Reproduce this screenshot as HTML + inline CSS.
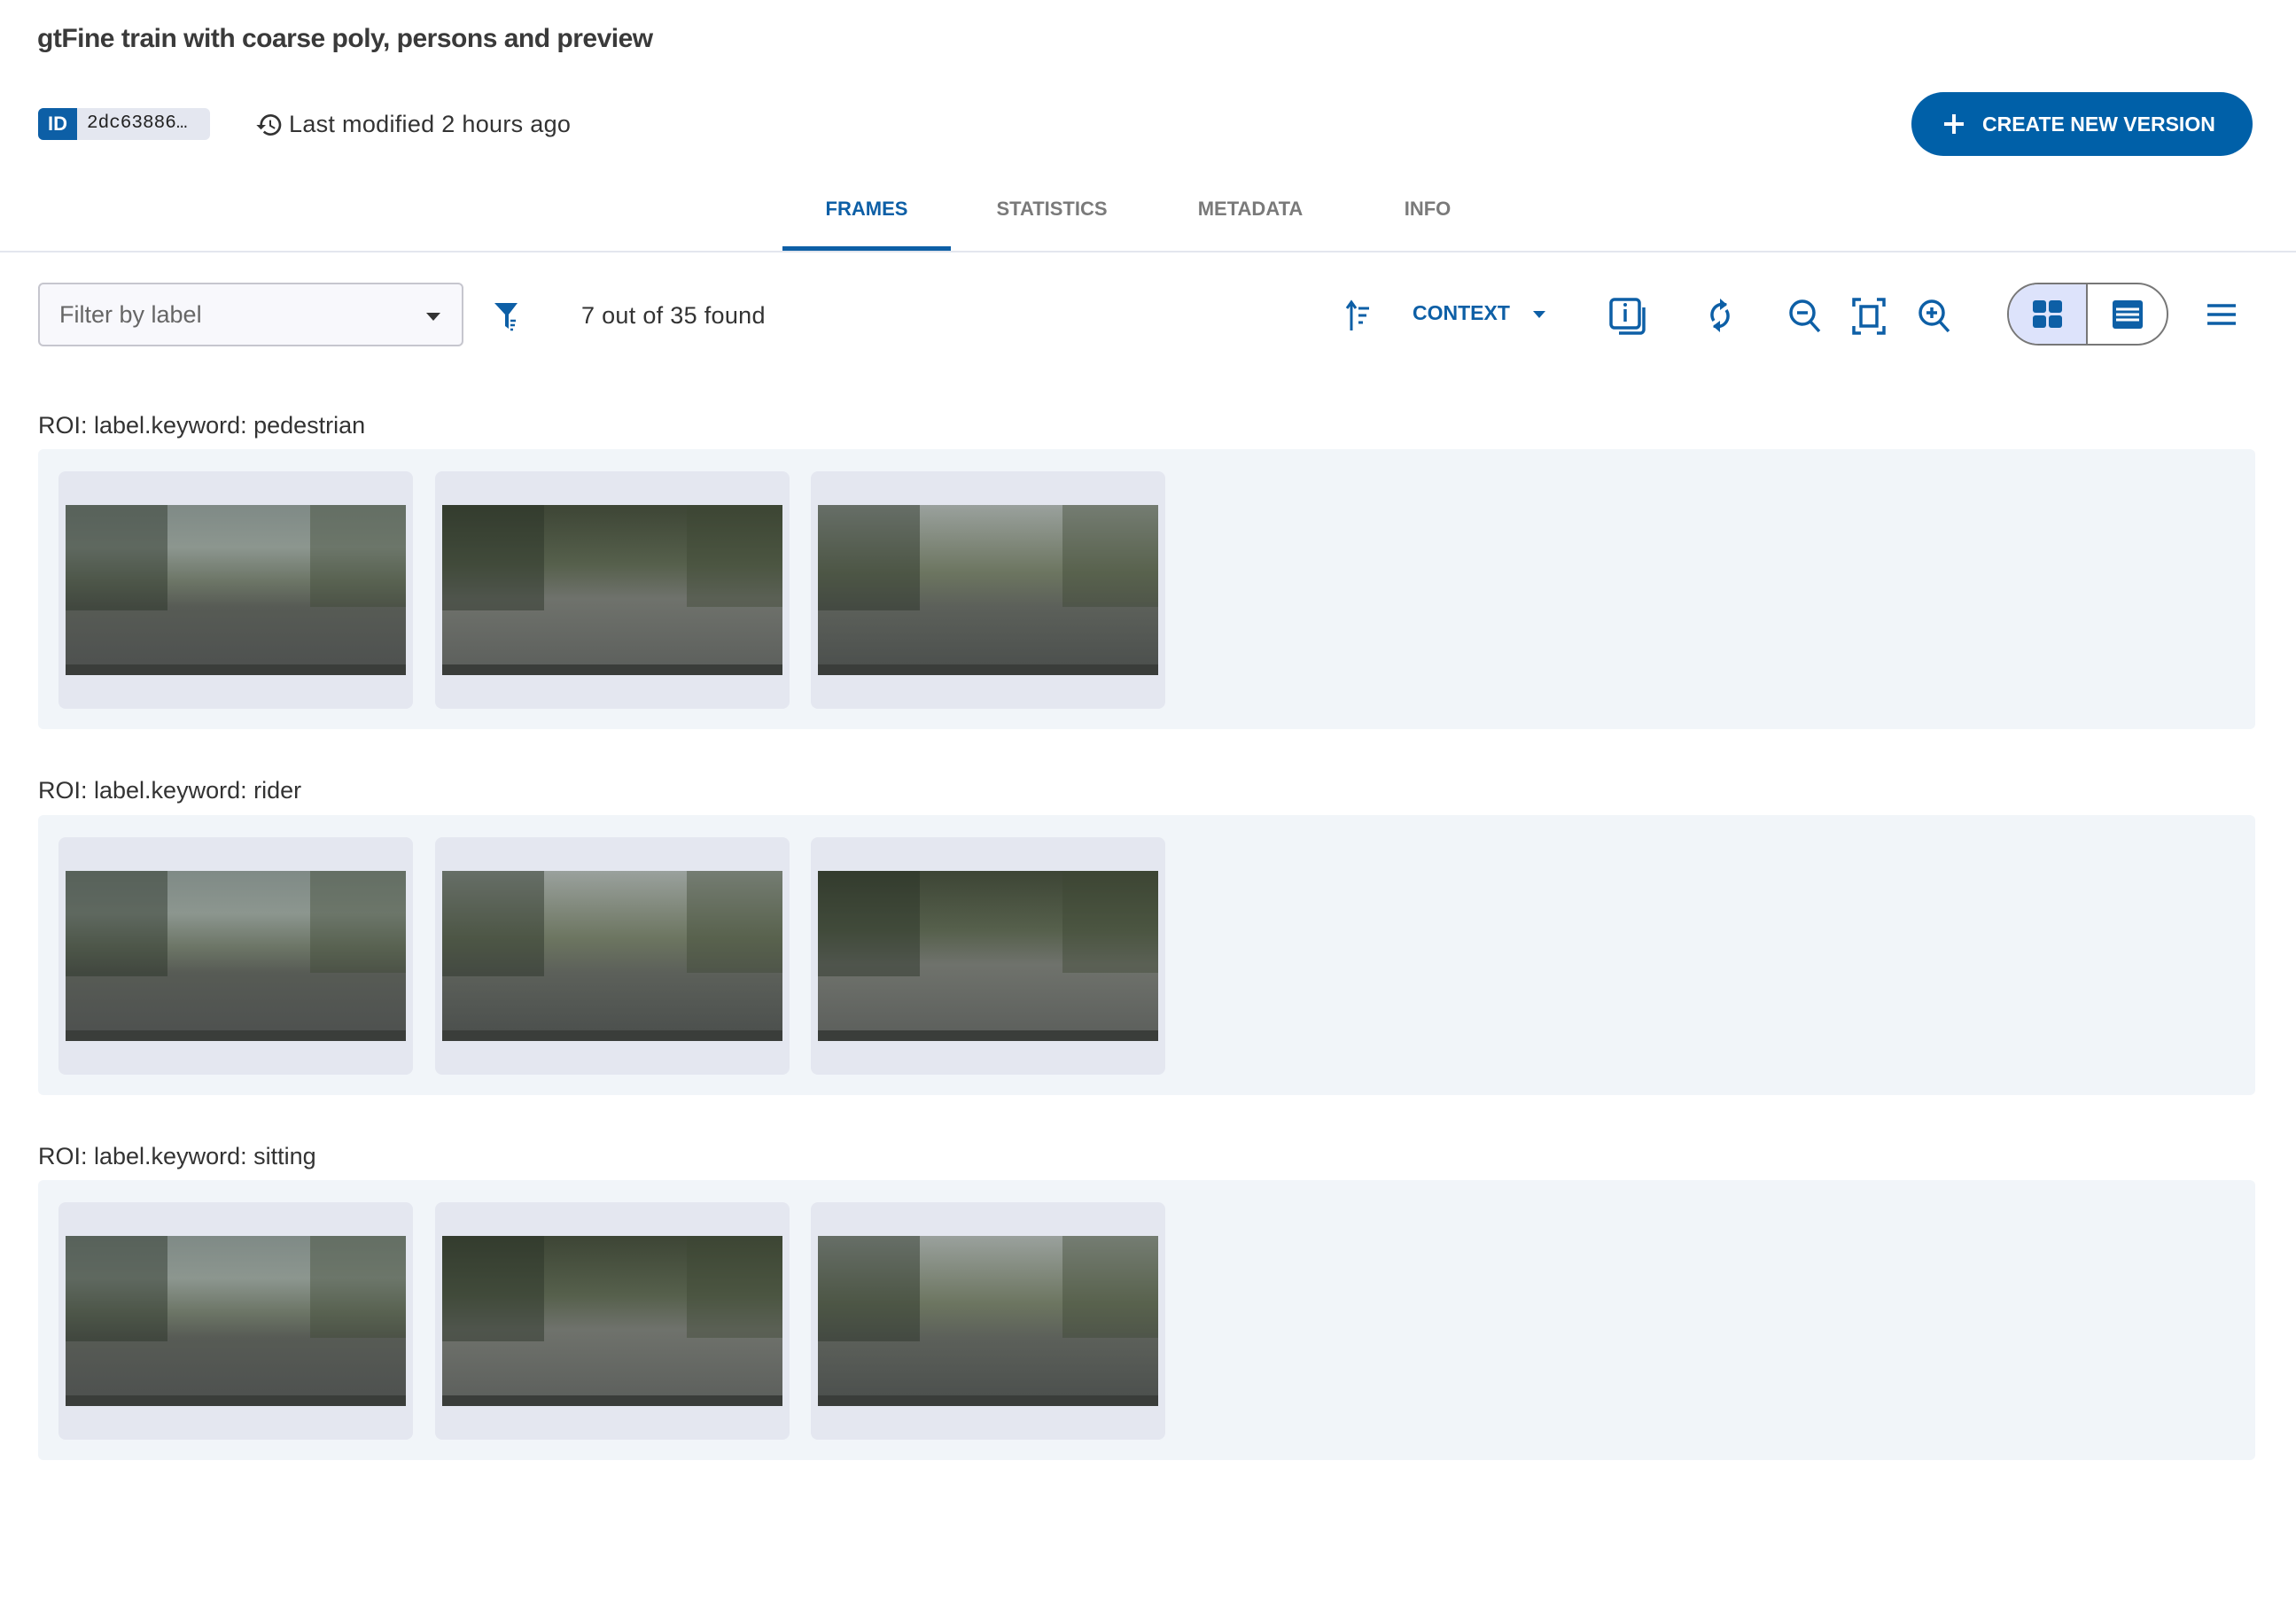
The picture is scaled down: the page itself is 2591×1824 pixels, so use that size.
<!DOCTYPE html>
<html><head><meta charset="utf-8"><style>
*{box-sizing:border-box;margin:0;padding:0}
body{width:2591px;height:1824px;background:#fff;font-family:"Liberation Sans",sans-serif;position:relative;overflow:hidden;color:#333}
.a{position:absolute}
.title{left:42px;top:27px;font-size:30px;font-weight:bold;color:#3a3a3a;letter-spacing:-0.5px}
.chip{left:43px;top:122px;width:194px;height:36px;background:#e4e7f0;border-radius:6px;overflow:hidden}
.chip .id{position:absolute;left:0;top:0;width:44px;height:36px;background:#0d5fa6;color:#fff;font-weight:bold;font-size:22px;text-align:center;line-height:36px}
.chip .h{position:absolute;left:55px;top:0;line-height:36px;font-family:"Liberation Mono",monospace;font-size:21px;color:#222}
.mod{left:326px;top:125px;font-size:27px;color:#333;letter-spacing:0.3px}
.btn{left:2157px;top:104px;width:385px;height:72px;border-radius:36px;background:#0060a8;color:#fff;font-weight:bold;font-size:23px;line-height:72px}
.tab{top:223px;font-size:22px;font-weight:bold;color:#7a7a7a;transform:translateX(-50%)}
.sel{color:#0d5fa6}
.line{left:0;top:283px;width:2591px;height:2px;background:#e3e6ee}
.ul{left:883px;top:278px;width:190px;height:5px;background:#0d5fa6}
.filter{left:43px;top:319px;width:480px;height:72px;background:#f8f8fc;border:2px solid #c6c6ce;border-radius:6px}
.filter span{position:absolute;left:22px;top:19px;font-size:27px;color:#666}
.tri{position:absolute;left:436px;top:32px;border-left:8px solid transparent;border-right:8px solid transparent;border-top:9px solid #333}
.found{left:656px;top:341px;font-size:27px;color:#333;letter-spacing:0.3px}
.ctx{left:1594px;top:340px;font-size:23px;font-weight:bold;color:#0d5fa6}
.tog{left:2265px;top:319px;width:182px;height:71px;border:2px solid #777;border-radius:36px;overflow:hidden}
.lbl{left:43px;font-size:27px;color:#333}
.panel{left:43px;width:2502px;height:316px;background:#f1f5f9;border-radius:6px}
.card{position:absolute;top:25px;width:400px;height:268px;background:#e4e7f0;border-radius:8px}
.img{position:absolute;left:8px;top:38px;width:384px;height:192px;overflow:hidden}
.i1{background:linear-gradient(180deg,#7f8a86 0%,#8c968f 25%,#6c7566 45%,#575b55 60%,#4d504f 100%)}
.i2{background:linear-gradient(180deg,#3d4535 0%,#56604c 35%,#6f726c 55%,#5b5e5b 100%)}
.i3{background:linear-gradient(180deg,#9aa19d 0%,#6c7560 40%,#5c605a 60%,#4a4e4c 100%)}
.img:before{content:"";position:absolute;left:0;top:0;width:30%;height:62%;background:rgba(40,48,38,.45)}
.img i{position:absolute;right:0;top:0;width:28%;height:60%;background:rgba(60,70,50,.4)}
.img:after{content:"";position:absolute;left:0;bottom:0;width:100%;height:12px;background:#3a3d3a}
</style></head><body>
<div class="a title">gtFine train with coarse poly, persons and preview</div>
<div class="a chip"><div class="id">ID</div><div class="h">2dc63886…</div></div>
<svg class="a" style="left:288px;top:125px" width="32" height="32" viewBox="0 0 24 24"><path d="M13 3a9 9 0 0 0-9 9H1l3.9 3.9L9 12H6a7 7 0 1 1 2.050 4.95l-1.42 1.42A9 9 0 1 0 13 3zm-1 5v5l4.25 2.52.77-1.28-3.52-2.09V8z" fill="#333"/></svg>
<div class="a mod">Last modified 2 hours ago</div>
<div class="a btn"><svg style="position:absolute;left:35px;top:23px" width="26" height="26" viewBox="0 0 26 26"><path d="M13 2v22M2 13h22" stroke="#fff" stroke-width="4"/></svg><span style="position:absolute;left:80px">CREATE NEW VERSION</span></div>
<div class="a tab sel" style="left:978px">FRAMES</div>
<div class="a tab" style="left:1187px">STATISTICS</div>
<div class="a tab" style="left:1411px">METADATA</div>
<div class="a tab" style="left:1611px">INFO</div>
<div class="a line"></div><div class="a ul"></div>
<div class="a filter"><span>Filter by label</span><div class="tri"></div></div>
<svg class="a" style="left:557px;top:340px" width="32" height="34" viewBox="0 0 32 34"><path d="M1 2h26L17 15v16l-4-3V15z" fill="#0d5fa6"/><path d="M19 22h6M19 27h5M19 32h3" stroke="#0d5fa6" stroke-width="2.5"/></svg>
<div class="a found">7 out of 35 found</div>
<svg class="a" style="left:1518px;top:338px" width="32" height="36" viewBox="0 0 32 36"><path d="M7 35V4M2 10l5-7 5 7" stroke="#0d5fa6" stroke-width="3" fill="none"/><path d="M15 10h12M15 18h9M15 26h5" stroke="#0d5fa6" stroke-width="3"/></svg>
<div class="a ctx">CONTEXT</div>
<div class="a" style="left:1730px;top:351px;border-left:7px solid transparent;border-right:7px solid transparent;border-top:8px solid #0d5fa6"></div>
<svg class="a" style="left:1815px;top:335px" width="44" height="44" viewBox="0 0 44 44"><rect x="3" y="3" width="32" height="32" rx="4" stroke="#0d5fa6" stroke-width="3.5" fill="none"/><path d="M40 12v25a4 4 0 0 1-4 4H12" stroke="#0d5fa6" stroke-width="3.5" fill="none"/><path d="M19 14v14" stroke="#0d5fa6" stroke-width="3.5"/><circle cx="19" cy="9" r="2" fill="#0d5fa6"/></svg>
<svg class="a" style="left:1924px;top:334px" width="34" height="44" viewBox="0 0 34 44"><path d="M24 10a12 12 0 0 0-14 18M10 34a12 12 0 0 0 14-18" stroke="#0d5fa6" stroke-width="3.5" fill="none"/><path d="M17 3l8 7-8 6zM17 41l-8-7 8-6z" fill="#0d5fa6"/></svg>
<svg class="a" style="left:2017px;top:336px" width="40" height="42" viewBox="0 0 40 42"><circle cx="17" cy="17" r="13" stroke="#0d5fa6" stroke-width="3.5" fill="none"/><path d="M26 27l10 11M11 17h12" stroke="#0d5fa6" stroke-width="3.5"/></svg>
<svg class="a" style="left:2090px;top:336px" width="38" height="42" viewBox="0 0 38 42"><path d="M2 10V2h8M28 2h8v8M36 32v8h-8M10 40H2v-8" stroke="#0d5fa6" stroke-width="3.5" fill="none"/><rect x="10" y="10" width="18" height="22" stroke="#0d5fa6" stroke-width="3.5" fill="none"/></svg>
<svg class="a" style="left:2163px;top:336px" width="40" height="42" viewBox="0 0 40 42"><circle cx="17" cy="17" r="13" stroke="#0d5fa6" stroke-width="3.5" fill="none"/><path d="M26 27l10 11M11 17h12M17 11v12" stroke="#0d5fa6" stroke-width="3.5"/></svg>
<div class="a tog"><div style="position:absolute;left:0;top:0;width:89px;height:71px;background:#dde3fb;border-right:2px solid #777"></div>
<svg style="position:absolute;left:27px;top:18px" width="34" height="32" viewBox="0 0 34 32"><rect x="0" y="0" width="15" height="14" rx="3" fill="#0d5fa6"/><rect x="18" y="0" width="15" height="14" rx="3" fill="#0d5fa6"/><rect x="0" y="17" width="15" height="14" rx="3" fill="#0d5fa6"/><rect x="18" y="17" width="15" height="14" rx="3" fill="#0d5fa6"/></svg>
<svg style="position:absolute;left:117px;top:18px" width="34" height="32" viewBox="0 0 34 32"><rect x="0" y="0" width="34" height="32" rx="3" fill="#0d5fa6"/><path d="M4 10h26M4 16h26M4 22h26" stroke="#fff" stroke-width="3"/></svg></div>
<svg class="a" style="left:2491px;top:342px" width="32" height="26" viewBox="0 0 32 26"><path d="M0 3h32M0 13h32M0 23h32" stroke="#0d5fa6" stroke-width="3.5"/></svg>

<div class="a lbl" style="top:465px">ROI: label.keyword: pedestrian</div>
<div class="a panel" style="top:507px">
<div class="card" style="left:23px"><div class="img i1"><i></i></div></div>
<div class="card" style="left:448px"><div class="img i2"><i></i></div></div>
<div class="card" style="left:872px"><div class="img i3"><i></i></div></div></div>
<div class="a lbl" style="top:877px">ROI: label.keyword: rider</div>
<div class="a panel" style="top:920px">
<div class="card" style="left:23px"><div class="img i1"><i></i></div></div>
<div class="card" style="left:448px"><div class="img i3"><i></i></div></div>
<div class="card" style="left:872px"><div class="img i2"><i></i></div></div></div>
<div class="a lbl" style="top:1290px">ROI: label.keyword: sitting</div>
<div class="a panel" style="top:1332px">
<div class="card" style="left:23px"><div class="img i1"><i></i></div></div>
<div class="card" style="left:448px"><div class="img i2"><i></i></div></div>
<div class="card" style="left:872px"><div class="img i3"><i></i></div></div></div>
</body></html>
